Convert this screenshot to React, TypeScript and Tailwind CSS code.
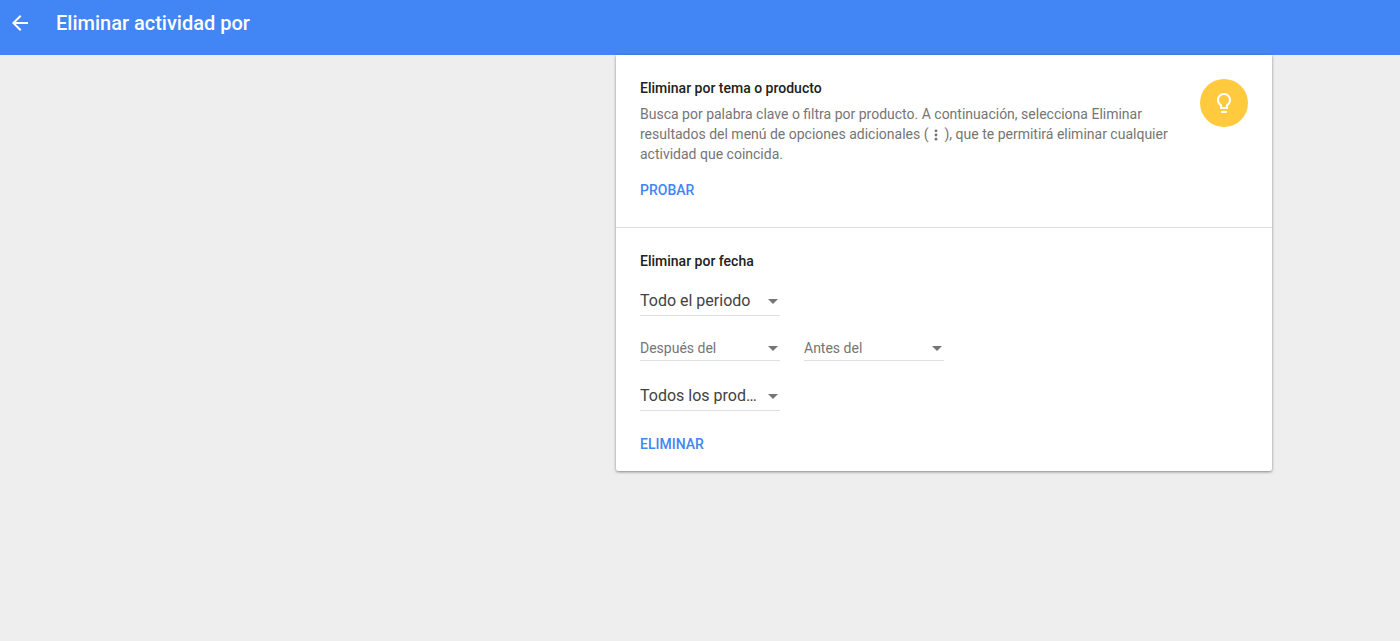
import React from "react";

function Select({ label, large, muted }: { label: string; large?: boolean; muted?: boolean }) {
  return (
    <div className={`w-[140px] flex items-center justify-between border-b border-[#e0e0e0] pr-[1px] ${large ? "h-[29px] text-[16px] text-[#424242]" : "h-[24px] text-[14px] text-[#757575]"}`}>
      <span>{label}</span>
      <span className="w-0 h-0 mr-[1px] border-l-[5px] border-r-[5px] border-t-[5px] border-l-transparent border-r-transparent border-t-[#757575]" />
    </div>
  );
}

export default function App() {
  return (
    <div className="min-h-[641px] bg-[#eeeeee] font-['Roboto',sans-serif] flex flex-col">
      <header className="h-[55px] bg-[#4285f4] flex items-start text-white">
        <svg className="ml-[8px] mt-[11px]" width="24" height="24" viewBox="0 0 24 24" fill="white">
          <path d="M20 11H7.83l5.59-5.59L12 4l-8 8 8 8 1.41-1.41L7.83 13H20v-2z" />
        </svg>
        <h1 className="ml-[24px] mt-[10px] text-[20px] leading-[26px] font-medium">Eliminar actividad por</h1>
      </header>
      <main className="ml-[616px] w-[656px] bg-white rounded-b-[2px] shadow-[0_1px_3px_rgba(0,0,0,0.45)]">
        <section className="h-[173px] border-b border-[#e0e0e0] pl-[24px] pr-[24px] pt-[24px] flex justify-between">
          <div className="w-[536px]">
            <h2 className="text-[14px] leading-[18px] font-medium text-[#212121]">Eliminar por tema o producto</h2>
            <p className="mt-[7px] text-[14px] leading-[20px] text-[#757575]">
              Busca por palabra clave o filtra por producto. A continuación, selecciona Eliminar resultados del menú de opciones adicionales (
              <svg className="inline-block align-[-3px] mx-[1px]" width="14" height="14" viewBox="0 0 14 14" fill="#757575">
                <circle cx="7" cy="2.8" r="1.4" />
                <circle cx="7" cy="7" r="1.4" />
                <circle cx="7" cy="11.2" r="1.4" />
              </svg>
              ), que te permitirá eliminar cualquier actividad que coincida.
            </p>
            <div className="mt-[17px] text-[14px] leading-[18px] font-medium text-[#4285f4]">PROBAR</div>
          </div>
          <div className="w-[48px] h-[48px] rounded-full bg-[#ffca3e] flex items-center justify-center">
            <svg width="24" height="24" viewBox="0 0 24 24" fill="white">
              <path d="M9 21c0 .55.45 1 1 1h4c.55 0 1-.45 1-1v-1H9v1zm3-19C8.14 2 5 5.14 5 9c0 2.38 1.19 4.47 3 5.74V17c0 .55.45 1 1 1h6c.55 0 1-.45 1-1v-2.26c1.81-1.27 3-3.36 3-5.74 0-3.86-3.14-7-7-7zm2.85 11.1l-.85.6V16h-4v-2.3l-.85-.6A4.997 4.997 0 0 1 7 9c0-2.76 2.24-5 5-5s5 2.24 5 5c0 1.63-.8 3.16-2.15 4.1z" />
            </svg>
          </div>
        </section>
        <section className="pl-[24px] pt-[24px] pb-[18px]">
          <h2 className="text-[14px] leading-[18px] font-medium text-[#212121]">Eliminar por fecha</h2>
          <div className="mt-[17px]">
            <Select label="Todo el periodo" large />
          </div>
          <div className="mt-[21px] flex gap-[24px]">
            <Select label="Después del" />
            <Select label="Antes del" />
          </div>
          <div className="mt-[21px]">
            <Select label="Todos los prod…" large />
          </div>
          <div className="mt-[24px] text-[14px] leading-[18px] font-medium text-[#4285f4]">ELIMINAR</div>
        </section>
      </main>
    </div>
  );
}
